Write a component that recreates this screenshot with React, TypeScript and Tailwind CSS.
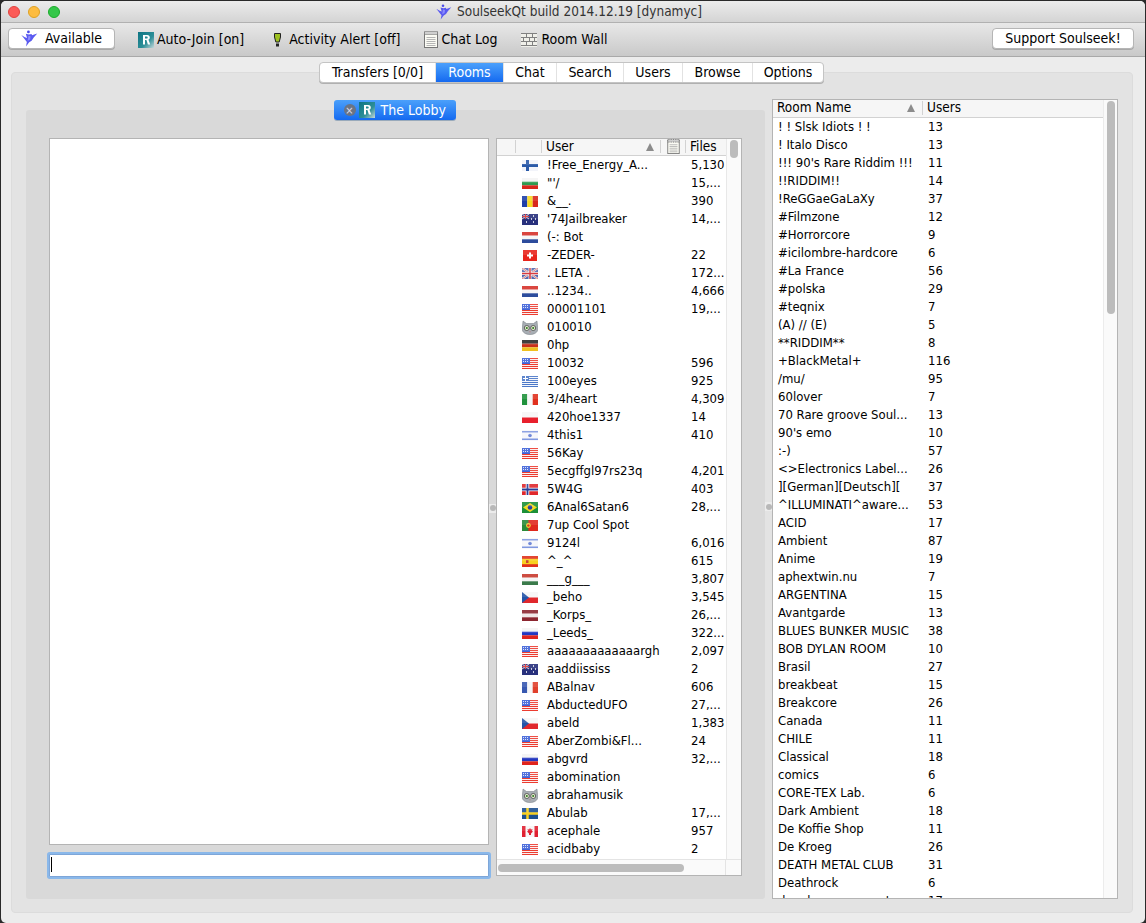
import type { ReactNode } from 'react';

type Row = [string, string, string?];

const users: Row[] = [
  ['fi', '!Free_Energy_A...', '5,130'],
  ['bg', `"'/`, '15,...'],
  ['ro', '&__.', '390'],
  ['au', "'74Jailbreaker", '14,...'],
  ['nl', '(-: Bot'],
  ['ch', '-ZEDER-', '22'],
  ['gb', '. LETA .', '172...'],
  ['nl', '..1234..', '4,666'],
  ['us', '00001101', '19,...'],
  ['cat', '010010'],
  ['de', '0hp'],
  ['us', '10032', '596'],
  ['gr', '100eyes', '925'],
  ['it', '3/4heart', '4,309'],
  ['pl', '420hoe1337', '14'],
  ['il', '4this1', '410'],
  ['us', '56Kay'],
  ['us', '5ecgffgl97rs23q', '4,201'],
  ['no', '5W4G', '403'],
  ['br', '6Anal6Satan6', '28,...'],
  ['pt', '7up Cool Spot'],
  ['il', '9124l', '6,016'],
  ['es', '^_^', '615'],
  ['hu', '___g___', '3,807'],
  ['cz', '_beho', '3,545'],
  ['lv', '_Korps_', '26,...'],
  ['ru', '_Leeds_', '322...'],
  ['us', 'aaaaaaaaaaaaargh', '2,097'],
  ['au', 'aaddiississ', '2'],
  ['fr', 'ABalnav', '606'],
  ['us', 'AbductedUFO', '27,...'],
  ['cz', 'abeld', '1,383'],
  ['us', 'AberZombi&Fl...', '24'],
  ['ru', 'abgvrd', '32,...'],
  ['us', 'abomination'],
  ['cat', 'abrahamusik'],
  ['se', 'Abulab', '17,...'],
  ['ca', 'acephale', '957'],
  ['us', 'acidbaby', '2'],
];

const rooms: [string, number][] = [
  ['! ! Slsk Idiots ! !', 13],
  ['! Italo Disco', 13],
  ["!!! 90's Rare Riddim !!!", 11],
  ['!!RIDDIM!!', 14],
  ['!ReGGaeGaLaXy', 37],
  ['#Filmzone', 12],
  ['#Horrorcore', 9],
  ['#icilombre-hardcore', 6],
  ['#La France', 56],
  ['#polska', 29],
  ['#teqnix', 7],
  ['(A) // (E)', 5],
  ['**RIDDIM**', 8],
  ['+BlackMetal+', 116],
  ['/mu/', 95],
  ['60lover', 7],
  ['70 Rare groove Soul...', 13],
  ["90's emo", 10],
  [':-)', 57],
  ['<>Electronics Label...', 26],
  ['][German][Deutsch][', 37],
  ['^ILLUMINATI^aware...', 53],
  ['ACID', 17],
  ['Ambient', 87],
  ['Anime', 19],
  ['aphextwin.nu', 7],
  ['ARGENTINA', 15],
  ['Avantgarde', 13],
  ['BLUES BUNKER MUSIC', 38],
  ['BOB DYLAN ROOM', 10],
  ['Brasil', 27],
  ['breakbeat', 15],
  ['Breakcore', 26],
  ['Canada', 11],
  ['CHILE', 11],
  ['Classical', 18],
  ['comics', 6],
  ['CORE-TEX Lab.', 6],
  ['Dark Ambient', 18],
  ['De Koffie Shop', 11],
  ['De Kroeg', 26],
  ['DEATH METAL CLUB', 31],
  ['Deathrock', 6],
  ['deephouse concert', 17],
];

const tabs = ['Transfers [0/0]', 'Rooms', 'Chat', 'Search', 'Users', 'Browse', 'Options'];
const tabWidths = ['w-[116px]', 'w-[68px]', 'w-[53px]', 'w-[67px]', 'w-[59px]', 'w-[70px]', 'w-[70px]'];

const Bird = ({ className }: { className: string }) => (
  <svg viewBox="0 0 16 16" className={className}>
    <circle cx="7" cy="1.800" r="1.300" fill="#4a4ae8" />
    <path d="M4.500 3.500l3 .8 2.500-.6.300 1.300 5-1.700-3.300 3.700-2 3-2.300 1.500-3 4 .8-4.300-1.800-2.200L.3 4.800l3.400 2 2 .7z" fill="#5a5af0" />
    <path d="M7 5.500l2 .4-.4 3-2.400 1.400z" fill="#8c8cff" />
  </svg>
);

const RoomIcon = () => (
  <svg viewBox="0 0 16 16" className="h-4 w-4 shrink-0">
    <defs>
      <linearGradient id="rg" x1="0" x2="1" y1="0" y2="1">
        <stop offset="0" stopColor="#0d7483" />
        <stop offset="0.6" stopColor="#2e8f98" />
        <stop offset="1" stopColor="#c6d8da" />
      </linearGradient>
    </defs>
    <rect width="16" height="16" fill="url(#rg)" />
    <path d="M5 3h4.200c1.700 0 2.600.9 2.600 2.400 0 1.100-.5 1.900-1.400 2.200l1.800 4.900H9.900L8.400 8H7v4.500H5zM7 4.600v1.900h1.700c.7 0 1-.4 1-1s-.3-.9-1-.9z" fill="#fff" />
  </svg>
);

const NoteIcon = ({ className }: { className: string }) => (
  <svg viewBox="0 0 14 17" className={className}>
    <rect x="0.5" y="1.500" width="13" height="15" fill="#fbfbf4" stroke="#777" />
    <rect x="0.5" y="0.500" width="13" height="3" fill="#cfcfcf" stroke="#666" strokeDasharray="1 1" />
    <path d="M2.500 6.500h9M2.500 8.500h9M2.500 10.500h9M2.500 12.500h9M2.500 14.500h9" stroke="#b5b5b5" />
  </svg>
);

const Flag = ({ code }: { code: string }) => {
  const tri = (a: string, b: string, c: string) => (
    <>
      <rect width="16" height="3.700" fill={a} />
      <rect y="3.700" width="16" height="3.600" fill={b} />
      <rect y="7.300" width="16" height="3.700" fill={c} />
    </>
  );
  const vert = (a: string, b: string, c: string) => (
    <>
      <rect width="5.300" height="11" fill={a} />
      <rect x="5.300" width="5.400" height="11" fill={b} />
      <rect x="10.700" width="5.300" height="11" fill={c} />
    </>
  );
  let body: ReactNode = null;
  if (code === 'fi') body = <><rect width="16" height="11" fill="#f2f4fa" /><path d="M0 5.500h16M5.500 0v11" stroke="#2a5aa8" strokeWidth="3" /></>;
  if (code === 'bg') body = tri('#f4f4f4', '#2f9a50', '#d8261c');
  if (code === 'ro') body = vert('#1f3fa8', '#f8d820', '#d8261c');
  if (code === 'nl') body = tri('#d6322a', '#f6f6f6', '#2c4c9c');
  if (code === 'ru') body = tri('#f4f4f4', '#2438c0', '#e0241c');
  if (code === 'de') body = tri('#2a2a2a', '#c8301c', '#f0c020');
  if (code === 'hu') body = tri('#c8382c', '#f4f4f4', '#3a7a4a');
  if (code === 'lv') body = tri('#8c2630', '#f0e8e8', '#8c2630');
  if (code === 'it') body = vert('#20923c', '#f6f6f6', '#e0301e');
  if (code === 'fr') body = vert('#3858b0', '#f6f6f6', '#e0402c');
  if (code === 'pl') body = <><rect width="16" height="5.500" fill="#f6f6f6" /><rect y="5.500" width="16" height="5.500" fill="#e8202c" /></>;
  if (code === 'ch') body = <><rect x="1" width="14" height="11" fill="#e8241c" /><path d="M8 2.500v6M5 5.500h6" stroke="#fff" strokeWidth="2" /></>;
  if (code === 'us') {
    body = (
      <>
        <rect width="16" height="11" fill="#fbeeee" />
        {[0, 2, 4, 6, 8, 10].map((y) => (
          <rect key={y} y={y} width="16" height="1" fill="#ec3c30" />
        ))}
        <rect width="8" height="6" fill="#3f62d8" />
        <path d="M1 1.500h6M1 3.500h6" stroke="#d8e0fa" strokeDasharray="1 1" />
      </>
    );
  }
  if (code === 'gr') {
    body = (
      <>
        <rect width="16" height="11" fill="#f4f6fb" />
        {[0, 2, 4, 6, 8, 10].map((y) => (
          <rect key={y} y={y} width="16" height="1" fill="#4c78c8" />
        ))}
        <rect width="7" height="5" fill="#4c78c8" />
        <path d="M3.500 0v5M1 2.500h5" stroke="#fff" />
      </>
    );
  }
  if (code === 'au') body = <><rect width="16" height="11" fill="#28307c" /><path d="M0 0l7 5M7 0L0 5" stroke="#e0d0d8" /><path d="M3.500 0v5M0 2.500h7" stroke="#d8383c" /><path d="M11 2h1M9 5h1M13 5h1M11 8h1M4 8h1" stroke="#fff" strokeWidth="1.500" /></>;
  if (code === 'gb') body = <><rect width="16" height="11" fill="#5468b0" /><path d="M0 0l16 11M16 0L0 11" stroke="#eee" strokeWidth="2" /><path d="M0 0l16 11M16 0L0 11" stroke="#d84a50" strokeWidth=".7" /><path d="M8 0v11M0 5.500h16" stroke="#eee" strokeWidth="3" /><path d="M8 0v11M0 5.500h16" stroke="#d83a40" strokeWidth="1.500" /></>;
  if (code === 'il') body = <><rect width="16" height="11" fill="#f6f6fa" /><rect y="1" width="16" height="1.500" fill="#8098e0" /><rect y="8.500" width="16" height="1.500" fill="#8098e0" /><circle cx="8" cy="5.500" r="1.800" fill="#7088d8" /></>;
  if (code === 'no') body = <><rect width="16" height="11" fill="#e0282c" /><path d="M5.500 0v11M0 5.500h16" stroke="#fff" strokeWidth="3.500" /><path d="M5.500 0v11M0 5.500h16" stroke="#2a3c98" strokeWidth="1.800" /></>;
  if (code === 'br') body = <><rect width="16" height="11" fill="#1c9038" /><path d="M8 1l7 4.500L8 10 1 5.500z" fill="#f4d820" /><circle cx="8" cy="5.500" r="2.300" fill="#2840a0" /></>;
  if (code === 'pt') body = <><rect width="16" height="11" fill="#e0281c" /><rect width="6.400" height="11" fill="#2a8a38" /><circle cx="6.400" cy="5.500" r="2.400" fill="#f0d030" /><circle cx="6.400" cy="5.500" r="1.200" fill="#d8381c" /></>;
  if (code === 'es') body = <><rect width="16" height="11" fill="#e0301c" /><rect y="2.800" width="16" height="5.400" fill="#f8d020" /><rect x="4" y="4" width="2.500" height="3" fill="#c84830" /></>;
  if (code === 'cz') body = <><rect width="16" height="5.500" fill="#f6f6f6" /><rect y="5.500" width="16" height="5.500" fill="#e0282c" /><path d="M0 0l7 5.500L0 11z" fill="#2454a8" /></>;
  if (code === 'se') body = <><rect width="16" height="11" fill="#1c5090" /><path d="M5.500 0v11M0 5.500h16" stroke="#f8d020" strokeWidth="2.500" /></>;
  if (code === 'ca') body = <><rect width="16" height="11" fill="#f6f6f6" /><rect width="3.500" height="11" fill="#e02030" /><rect x="12.500" width="3.500" height="11" fill="#e02030" /><path d="M8 2l1 1.500 1.500-.5-.5 2 1 .5L9 7.500V9H7V7.500L5 5.500l1-.5-.5-2L7 3.500z" fill="#e02030" /></>;
  if (code === 'cat') {
    return (
      <svg viewBox="0 0 16 15" className="mt-[2px] h-[15px] w-4">
        <path d="M1 1l3.500 2.500h7L15 1l.8 8c0 3.500-3.500 5.500-7.800 5.500S.2 12.500.2 9z" fill="#a8aeb4" stroke="#70767c" strokeWidth=".5" />
        <circle cx="4.800" cy="8" r="2.500" fill="#eef2d8" stroke="#333" strokeWidth=".7" />
        <circle cx="11.200" cy="8" r="2.500" fill="#eef2d8" stroke="#333" strokeWidth=".7" />
        <circle cx="4.800" cy="8" r="1.100" fill="#2e7a20" />
        <circle cx="11.200" cy="8" r="1.100" fill="#2e7a20" />
        <path d="M7 11.500h2l-1 1z" fill="#c06a70" />
      </svg>
    );
  }
  return (
    <svg viewBox="0 0 16 11" className="mt-[4px] h-[11px] w-4">
      {body}
      <rect width="16" height="5" fill="#fff" opacity=".1" />
    </svg>
  );
};

const Handle = () => (
  <div className="flex h-[9px] w-[7px] items-center justify-center bg-[#ececec]">
    <div className="h-[6px] w-[6px] rounded-full bg-[#b8b8b8]" />
  </div>
);

const Arrow = () => (
  <div className="h-0 w-0 border-x-[4px] border-b-[8px] border-x-transparent border-b-[#8c8c8c]" />
);

export default function App() {
  return (
    <div className="h-[923px] w-[1146px] overflow-hidden bg-[#2a2a2a] pl-px pt-px font-['DejaVu_Sans_Condensed','DejaVu_Sans',sans-serif] text-[13px] text-black">
      <div className="flex h-[922px] w-[1144px] flex-col overflow-hidden rounded-[5px] bg-[#ececec]">
        <div className="flex h-[22px] shrink-0 items-center border-b border-[#b1b1b1] bg-gradient-to-b from-[#ececec] to-[#d4d4d4] pl-[7px]">
          <div className="flex gap-2">
            <div className="h-3 w-3 rounded-full border border-[#e0443e] bg-[#fc5b57]" />
            <div className="h-3 w-3 rounded-full border border-[#dea123] bg-[#fdbc40]" />
            <div className="h-3 w-3 rounded-full border border-[#1aab29] bg-[#34c749]" />
          </div>
          <div className="ml-[376px] flex items-center gap-[5px] text-[13.500px] text-[#333]">
            <Bird className="h-4 w-4" />
            <span>SoulseekQt build 2014.12.19 [dynamyc]</span>
          </div>
        </div>

        <div className="flex h-[34px] shrink-0 items-center border-b border-[#a9a9a9] bg-gradient-to-b from-[#e8e8e8] to-[#c9c9c9] pl-[7px] pr-[11px] text-[14px]">
          <div className="-mt-[2px] flex h-[21px] w-[107px] items-center rounded-[4px] border border-[#b5b5b5] bg-white pl-3 shadow-[0_1px_0_#a8a8a8]">
            <Bird className="h-[17px] w-[17px]" />
            <span className="ml-[7px]">Available</span>
          </div>
          <div className="ml-[23px] flex items-center gap-[3px]">
            <RoomIcon />
            <span>Auto-Join [on]</span>
          </div>
          <div className="ml-[27px] flex items-center gap-[8px]">
            <svg viewBox="0 0 7 14" className="ml-[3px] h-[14px] w-[7px]">
              <path d="M.5.500h6v3.500l-1.300 5H1.800L.5 4z" fill="#9dc020" stroke="#222" />
              <rect x="2" y="10.500" width="3" height="3" fill="#222" />
            </svg>
            <span>Activity Alert [off]</span>
          </div>
          <div className="ml-[23px] flex items-center gap-1">
            <NoteIcon className="h-[17px] w-[14px]" />
            <span>Chat Log</span>
          </div>
          <div className="ml-[24px] flex items-center gap-1">
            <svg viewBox="0 0 16 14" className="h-[14px] w-4">
              <rect width="16" height="14" fill="#efefe9" />
              <path d="M0 .5h16M0 4.500h16M0 8.500h16M0 12.500h16M5.500 1v3M11.500 1v3M2.500 5v3M8.500 5v3M13.500 5v3M5.500 9v3M11.500 9v3" stroke="#808080" fill="none" />
            </svg>
            <span>Room Wall</span>
          </div>
          <div className="-mt-[2px] ml-auto flex h-[21px] w-[142px] items-center justify-center rounded-[4px] border border-[#b5b5b5] bg-white shadow-[0_1px_0_#a8a8a8]">
            Support Soulseek!
          </div>
        </div>

        <div className="flex flex-1 flex-col pb-[10px] pl-[10px] pr-[12px] pt-[5px]">
          <div className="relative z-10 -mb-[11px] flex h-[21px] shrink-0 justify-center pr-px text-[14px]">
            <div className="flex overflow-hidden rounded-[4px] border border-[#c4c4c4] bg-white shadow-[0_1px_0_#b0b0b0]">
              {tabs.map((t, i) => (
                <div
                  key={t}
                  className={`flex items-center justify-center border-r border-[#e2e2e2] last:border-r-0 ${tabWidths[i]} ${
                    t === 'Rooms' ? 'bg-gradient-to-b from-[#4ba0fb] to-[#1469f0] text-white' : ''
                  }`}
                >
                  {t}
                </div>
              ))}
            </div>
          </div>

          <div className="flex flex-1 rounded-[4px] border border-[#dcdcdc] bg-[#e3e3e3] pl-[14px] pt-[26px]">
            <div className="flex w-[739px] shrink-0 flex-col pb-[13px] pt-px">
              <div className="relative z-10 -mb-[10px] flex h-[20px] shrink-0 justify-center pr-[2px]">
                <div className="flex w-[122px] items-center rounded-[3px] bg-gradient-to-b from-[#4ba0fb] to-[#1469f0] pl-[10px] text-[14px] text-white shadow-[0_1px_0_#9ab]">
                  <div className="flex h-3 w-3 items-center justify-center rounded-full bg-[#6a7484] text-[11px] leading-none text-[#dde]">×</div>
                  <div className="ml-[3px]"><RoomIcon /></div>
                  <span className="ml-[6px]">The Lobby</span>
                </div>
              </div>
              <div className="flex flex-1 rounded-[3px] bg-[#d9d9d9] pb-[23px] pl-[23px] pr-[23px] pt-[28px]">
                <div className="flex w-[440px] shrink-0 flex-col">
                  <div className="flex-1 border border-[#b4b4b4] bg-white" />
                  <div className="mt-[9px] -mb-px h-[23px] shrink-0 rounded-[1px] border border-[#7ea6d8] bg-white py-[2px] pl-px ring-[2px] ring-[#8ab8ea]">
                    <div className="h-[15px] w-px bg-black" />
                  </div>
                </div>
                <div className="flex w-[7px] shrink-0 items-center pt-[2px]">
                  <Handle />
                </div>
                <div className="flex w-[246px] shrink-0 flex-col overflow-hidden border border-[#b4b4b4] bg-white">
                  <div className="flex min-h-0 flex-1">
                    <div className="w-[229px] shrink-0 overflow-hidden">
                      <div className="flex h-[17px] items-center border-b border-[#d2d2d2] bg-[#f6f6f6] pb-px text-[13.500px]">
                        <div className="h-[13px] w-[19px] border-r border-[#d2d2d2]" />
                        <div className="h-[13px] w-[26px] border-r border-[#d2d2d2]" />
                        <div className="flex h-[13px] w-[119px] items-center justify-between border-r border-[#d2d2d2] pl-1 pr-[6px]">
                          <span>User</span>
                          <Arrow />
                        </div>
                        <div className="flex h-[13px] w-[25px] items-center justify-center border-r border-[#d2d2d2]">
                          <NoteIcon className="h-[15px] w-[13px]" />
                        </div>
                        <span className="pl-1">Files</span>
                      </div>
                      {users.map(([flag, name, files], i) => (
                        <div key={i} className="flex h-[18px] items-center whitespace-nowrap">
                          <div className="flex h-[18px] w-[45px] items-start pl-[25px]">
                            <Flag code={flag} />
                          </div>
                          <div className="w-[144px] pl-[5px]">{name}</div>
                          <div className="w-10 overflow-hidden pl-[5px]">{files}</div>
                        </div>
                      ))}
                    </div>
                    <div className="flex-1 border-l border-[#e8e8e8] bg-[#fafafa] pl-[3px] pt-px">
                      <div className="h-[18px] w-[8px] rounded-full bg-[#bcbcbc]" />
                    </div>
                  </div>
                  <div className="flex h-[16px] shrink-0 border-t border-[#e4e4e4] bg-[#fafafa]">
                    <div className="flex w-[229px] items-center border-r border-[#e4e4e4] pl-px">
                      <div className="h-[8px] w-[186px] rounded-full bg-[#bcbcbc]" />
                    </div>
                  </div>
                </div>
              </div>
            </div>

            <div className="flex w-[7px] shrink-0 items-center pt-[2px]">
              <Handle />
            </div>

            <div className="flex h-[800px] w-[346px] shrink-0 overflow-hidden border border-[#b4b4b4] bg-white">
              <div className="w-[330px] shrink-0 overflow-hidden">
                <div className="flex h-[18px] items-center border-b border-[#d2d2d2] bg-[#f6f6f6] pb-[2px] text-[13.500px]">
                  <div className="flex h-[14px] w-[150px] items-center justify-between border-r border-[#d2d2d2] pl-1 pr-[7px]">
                    <span>Room Name</span>
                    <Arrow />
                  </div>
                  <span className="pl-1">Users</span>
                </div>
                {rooms.map(([name, count]) => (
                  <div key={name} className="flex h-[18px] items-center whitespace-nowrap">
                    <div className="w-[150px] pl-[5px]">{name}</div>
                    <div className="pl-[5px]">{count}</div>
                  </div>
                ))}
              </div>
              <div className="flex-1 border-l border-[#ececec] bg-[#fafafa] pl-[3px] pt-px">
                <div className="h-[213px] w-[8px] rounded-full bg-[#bcbcbc]" />
              </div>
            </div>
          </div>
        </div>
      </div>
    </div>
  );
}
